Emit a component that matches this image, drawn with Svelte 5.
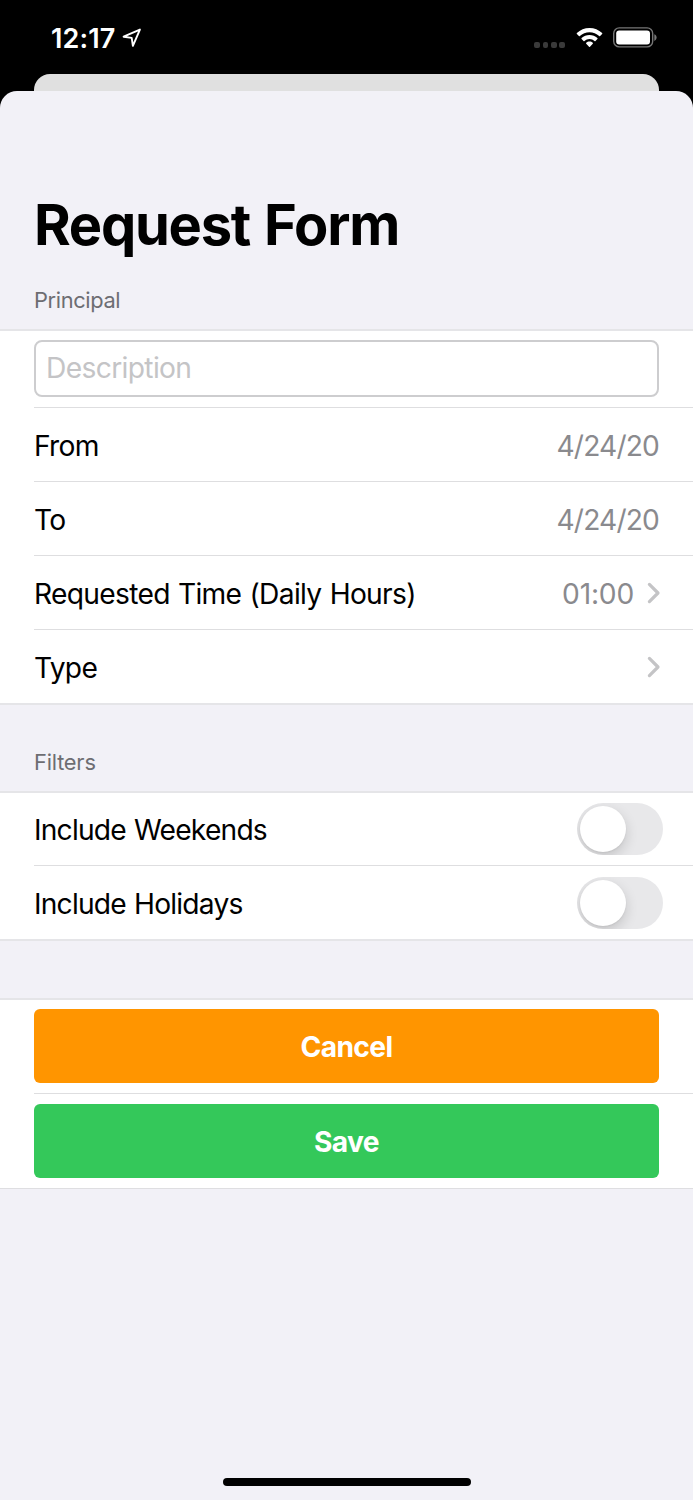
<script>
  let description = $state('')

  const rows = [
    { label: 'From', value: '4/24/20', link: false },
    { label: 'To', value: '4/24/20', link: false },
    { label: 'Requested Time (Daily Hours)', value: '01:00', link: true },
    { label: 'Type', value: '', link: true }
  ]

  let filters = $state([
    { label: 'Include Weekends', on: false },
    { label: 'Include Holidays', on: false }
  ])
</script>

<div class="screen">
  <header class="status">
    <div class="clock">
      <span class="time">12:17</span>
      <svg class="location" width="20" height="20" viewBox="0 0 20 20">
        <path d="M1.6 8.7 17.9 1.6 10.9 17.8 9.7 9.9Z" />
      </svg>
    </div>
    <div class="indicators">
      <span class="dots"><i></i><i></i><i></i><i></i></span>
      <svg class="wifi" width="27" height="21" viewBox="0 0 28 21" preserveAspectRatio="none">
        <path d="M14 .9c5 0 9.6 1.9 13.1 5.2.3.3.3.7 0 1L25 9.1c-.3.3-.7.3-1 0C21.3 6.6 17.8 5.2 14 5.2S6.7 6.6 4 9.1c-.3.3-.7.3-1 0L.9 7.1c-.3-.3-.3-.7 0-1C4.4 2.8 9 .9 14 .9Z" />
        <path d="M14 7.9c3.1 0 6 1.2 8.2 3.2.3.3.3.7 0 1l-2 2c-.3.3-.7.3-1 0-1.4-1.3-3.2-2-5.200-2s-3.800.7-5.200 2c-.3.3-.7.3-1 0l-2-2c-.3-.3-.3-.7 0-1C8 9.100 10.900 7.900 14 7.900Z" />
        <path d="M14 14.5c1.300 0 2.500.5 3.400 1.300.3.3.3.7 0 1l-2.900 3c-.3.3-.7.3-1 0l-2.900-3c-.3-.3-.3-.7 0-1 .9-.8 2.100-1.300 3.400-1.300Z" />
      </svg>
      <svg class="battery" width="44" height="21" viewBox="0 0 44 21">
        <rect x=".7" y=".9" width="39" height="19" rx="5.600" fill="none" stroke="#767676" stroke-width="1.400" />
        <rect x="3.200" y="3.600" width="33.800" height="13.800" rx="3" fill="#fff" />
        <path d="M41.300 7.200v6.800c1.500-.6 2.300-1.900 2.300-3.400S42.800 7.800 41.300 7.200Z" fill="#767676" />
      </svg>
    </div>
  </header>

  <div class="behind"></div>

  <main class="sheet">
    <h1>Request Form</h1>

    <h2>Principal</h2>
    <section class="group principal">
      <div class="row field">
        <input type="text" placeholder="Description" bind:value={description} />
      </div>
      {#each rows as row}
        <div class="row">
          <span class="label">{row.label}</span>
          {#if row.value}
            <span class="value" class:date={!row.link}>{row.value}</span>
          {/if}
          {#if row.link}
            <svg class="chevron" width="14" height="22" viewBox="0 0 14 22">
              <path d="M2.400 2.400 11 11 2.400 19.600" />
            </svg>
          {/if}
        </div>
      {/each}
    </section>

    <h2 class="filters-title">Filters</h2>
    <section class="group filters">
      {#each filters as filter}
        <div class="row">
          <span class="label">{filter.label}</span>
          <button
            class="toggle"
            class:on={filter.on}
            role="switch"
            aria-checked={filter.on}
            aria-label={filter.label}
            onclick={() => (filter.on = !filter.on)}
          >
            <span class="knob"></span>
          </button>
        </div>
      {/each}
    </section>

    <section class="group actions">
      <div class="row action"><button class="btn cancel">Cancel</button></div>
      <div class="row action"><button class="btn save">Save</button></div>
    </section>

    <div class="home"></div>
  </main>
</div>

<style>
  :global(body) {
    margin: 0;
    background: #000;
  }

  .screen {
    width: 693px;
    height: 1500px;
    overflow: hidden;
    display: flex;
    flex-direction: column;
    background: #000;
    color: #000;
    font-family: Inter, 'Liberation Sans', sans-serif;
    font-size: 28.2px;
    letter-spacing: -0.7px;
  }

  .status {
    height: 74px;
    box-sizing: border-box;
    padding: 0 36px 0 51px;
    display: flex;
    justify-content: space-between;
    color: #fff;
  }

  .clock {
    display: flex;
    padding-top: 22px;
  }

  .time {
    font-size: 27px;
    line-height: 33px;
    font-weight: 600;
    letter-spacing: 0.15px;
  }

  .location {
    margin: 6px 0 0 6.5px;
    fill: none;
    stroke: #fff;
    stroke-width: 1.9;
    stroke-linejoin: round;
  }

  .indicators {
    display: flex;
    align-items: flex-start;
    padding-top: 27px;
  }

  .dots {
    display: flex;
    gap: 2.6px;
    margin: 15px 10.5px 0 0;
  }

  .dots i {
    width: 5.8px;
    height: 5.8px;
    border-radius: 2px;
    background: #3a3a3a;
  }

  .wifi {
    fill: #fff;
    margin-right: 10.300px;
  }

  .behind {
    height: 17px;
    margin: 0 34px;
    background: #e0e0e0;
    border-radius: 16px 16px 0 0;
  }

  .sheet {
    flex: 1;
    display: flex;
    flex-direction: column;
    background: #f2f1f7;
    border-radius: 17px 17px 0 0;
  }

  h1 {
    margin: 99px 34px 0;
    font-size: 56px;
    line-height: 70px;
    font-weight: 700;
    letter-spacing: -1.25px;
    word-spacing: 2px;
  }

  h2 {
    margin: 26px 34px 0;
    height: 43px;
    font-size: 21.8px;
    line-height: 28px;
    font-weight: 400;
    letter-spacing: -0.35px;
    color: #6d6d72;
  }

  .filters-title {
    margin-top: 43px;
    letter-spacing: -0.2px;
  }

  .group {
    background: #fff;
    border-top: 2px solid #e5e5e8;
    border-bottom: 2px solid #e5e5e8;
  }

  .row {
    height: 74px;
    box-sizing: border-box;
    margin-left: 34px;
    padding: 1px 34px 0 0;
    display: flex;
    align-items: center;
    border-bottom: 1px solid #dedee0;
  }

  .row:last-child {
    height: 73px;
    border-bottom: 0;
  }

  .field {
    height: 77px;
    padding: 0 34px 1px 0;
  }

  input {
    width: 625px;
    height: 57px;
    box-sizing: border-box;
    padding: 0 10px 2px;
    border: 2px solid #cdcdcf;
    border-radius: 8px;
    outline: none;
    font: inherit;
    letter-spacing: -0.65px;
  }

  input::placeholder {
    color: #c4c4c6;
    opacity: 1;
  }

  .label {
    flex: 1;
    padding-top: 1px;
    word-spacing: 1px;
  }

  .value {
    padding-top: 1px;
    color: #8a8a8e;
    letter-spacing: -0.2px;
  }

  .value.date {
    letter-spacing: -0.85px;
  }

  .chevron {
    margin: 0 -2px 0 13px;
    fill: none;
    stroke: #c4c4c6;
    stroke-width: 3.2;
    stroke-linecap: round;
    stroke-linejoin: round;
  }

  .filters .row {
    height: 73px;
    padding: 0 30px 0 0;
  }

  .filters .row:last-child {
    padding-top: 1px;
  }

  .filters .label {
    letter-spacing: -0.8px;
  }

  .toggle {
    width: 86px;
    height: 52px;
    padding: 3px;
    border: 0;
    border-radius: 26px;
    background: #e8e8ea;
    overflow: hidden;
  }

  .toggle.on {
    background: #34c759;
  }

  .knob {
    display: block;
    width: 46px;
    height: 46px;
    border-radius: 50%;
    background: #fff;
    box-shadow: 0 5px 13px rgba(0, 0, 0, 0.16), 0 1px 2px rgba(0, 0, 0, 0.06);
  }

  .toggle.on .knob {
    margin-left: auto;
  }

  .actions {
    margin-top: 57px;
    border-bottom: 1px solid #dedee1;
  }

  .row.action {
    height: 94px;
    padding-top: 0;
  }

  .row.action:first-child {
    padding-bottom: 1px;
  }

  .btn {
    width: 625px;
    height: 74px;
    padding: 1px 0 0;
    border: 0;
    border-radius: 6px;
    color: #fff;
    font: inherit;
    font-weight: 700;
    letter-spacing: -0.6px;
  }

  .cancel {
    background: #ff9500;
  }

  .save {
    background: #34c85a;
  }

  .home {
    width: 248px;
    height: 8px;
    margin: auto auto 14px;
    border-radius: 4px;
    background: #000;
  }
</style>
